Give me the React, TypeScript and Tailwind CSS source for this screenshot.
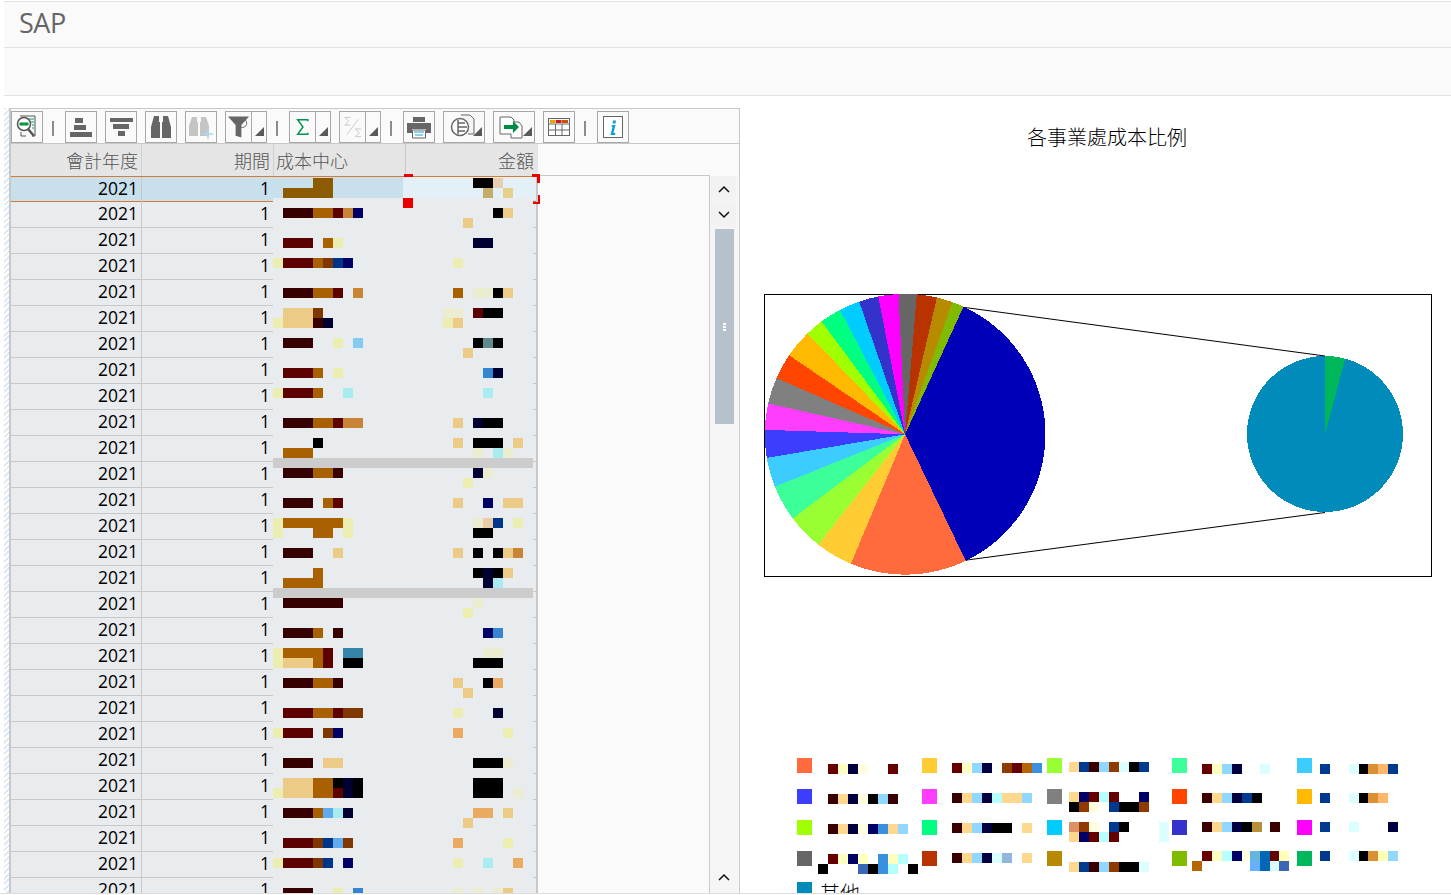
import type { ReactNode } from "react"

const cjk = '"Noto Sans CJK TC", "Noto Sans", sans-serif'

// redaction mosaic colours
const D = "#360000"
const M = "#5c0000"
const O = "#a86000"
const B = "#803600"
const C = "#c98436"
const T = "#ebcb85"
const Y = "#ecedb0"
const P = "#ecedd0"
const N = "#000066"
const K = "#000033"
const L = "#00358c"
const A = "#a8ecf0"
const S = "#3585d0"
const R = "#eaaa60"
const Z = "#000000"

type Row = [number, [number, number, string][]]

const tableMosaic: Row[] = [
  [178, [[313, 20, "#8c5a00"], [473, 20, Z], [493, 10, "#e6cfb0"]]],
  [188, [[283, 50, "#8c5a00"], [483, 10, "#c4ad68"], [503, 10, "#e6d08c"]]],
  [198, [[403, 10, "#e60000"]]],
  [208, [[283, 30, D], [313, 20, O], [333, 10, M], [343, 10, C], [353, 10, N], [493, 10, Z], [503, 10, T]]],
  [218, [[463, 10, T]]],
  [238, [[283, 30, M], [323, 10, O], [333, 10, Y], [473, 20, K]]],
  [258, [[273, 10, Y], [283, 30, M], [313, 10, O], [323, 10, B], [333, 10, L], [343, 10, N], [453, 10, Y]]],
  [288, [[283, 30, D], [313, 20, O], [333, 10, M], [353, 10, C], [453, 10, O], [473, 20, P], [493, 10, Z], [503, 10, T]]],
  [308, [[283, 30, T], [313, 10, B], [443, 20, P], [473, 10, M], [483, 20, Z]]],
  [318, [[273, 10, Y], [283, 30, T], [313, 10, D], [323, 10, K], [443, 10, Y], [453, 10, T]]],
  [338, [[283, 30, D], [333, 10, Y], [353, 10, "#85caf0"], [473, 10, Z], [483, 10, "#5f8a8a"], [493, 10, Z]]],
  [348, [[463, 10, T]]],
  [368, [[283, 30, M], [313, 10, O], [333, 10, Y], [483, 10, S], [493, 10, K]]],
  [388, [[273, 10, Y], [283, 30, M], [313, 10, O], [343, 10, A], [483, 10, A]]],
  [418, [[283, 30, D], [313, 20, O], [333, 10, M], [343, 20, C], [453, 10, T], [473, 10, K], [483, 20, Z]]],
  [438, [[313, 10, Z], [453, 10, T], [473, 30, Z], [513, 10, T]]],
  [448, [[283, 30, O], [473, 10, P], [493, 10, A], [503, 10, P]]],
  [458, [[273, 260, "#cccccc"]]],
  [468, [[283, 30, D], [313, 20, O], [333, 10, D], [473, 10, K], [483, 10, P]]],
  [478, [[463, 10, Y]]],
  [498, [[283, 30, D], [323, 10, O], [333, 10, M], [453, 10, T], [483, 10, N], [503, 20, T]]],
  [518, [[273, 10, Y], [283, 60, O], [343, 10, Y], [473, 10, P], [483, 10, "#ebcbaa"], [493, 10, L], [513, 10, Y]]],
  [528, [[273, 10, Y], [313, 20, O], [343, 10, Y], [473, 20, Z]]],
  [548, [[283, 30, D], [333, 10, T], [453, 10, T], [473, 10, Z], [493, 10, Z], [503, 10, T], [513, 10, C]]],
  [568, [[313, 10, O], [473, 10, Z], [483, 10, K], [493, 10, Z], [503, 10, T]]],
  [578, [[283, 40, O], [483, 10, K], [493, 10, A]]],
  [588, [[273, 260, "#cccccc"]]],
  [598, [[283, 60, D], [473, 10, P]]],
  [608, [[463, 10, Y]]],
  [628, [[283, 30, D], [313, 10, O], [333, 10, D], [483, 10, N], [493, 10, S]]],
  [648, [[273, 10, Y], [283, 40, O], [323, 10, M], [343, 20, "#3585aa"], [483, 20, P]]],
  [658, [[273, 10, Y], [283, 30, T], [313, 10, O], [323, 10, M], [343, 20, Z], [473, 30, Z]]],
  [678, [[283, 30, D], [313, 20, O], [333, 10, D], [453, 10, T], [483, 10, Z], [493, 10, R]]],
  [688, [[463, 10, T]]],
  [708, [[283, 30, M], [313, 20, O], [333, 10, M], [343, 20, B], [453, 10, Y], [493, 10, K]]],
  [728, [[273, 10, Y], [283, 30, M], [323, 10, B], [333, 10, N], [453, 10, R], [503, 10, Y]]],
  [758, [[283, 30, D], [323, 20, T], [473, 30, Z], [503, 10, P]]],
  [778, [[283, 30, T], [313, 20, O], [333, 10, Z], [343, 10, K], [353, 10, Z], [473, 30, Z]]],
  [788, [[273, 10, Y], [283, 30, T], [313, 20, O], [333, 10, M], [343, 10, K], [353, 10, Z], [473, 30, Z], [513, 10, P]]],
  [808, [[283, 30, D], [313, 10, O], [323, 10, "#60aaf0"], [333, 10, A], [343, 10, K], [473, 20, R], [503, 10, T]]],
  [818, [[463, 10, T]]],
  [838, [[283, 30, M], [313, 10, B], [323, 10, L], [333, 10, "#60aaf0"], [343, 10, B], [453, 10, R], [503, 10, Y]]],
  [858, [[273, 10, Y], [283, 30, M], [313, 10, B], [323, 10, L], [343, 10, N], [453, 10, Y], [483, 10, A], [513, 10, R]]],
  [888, [[283, 30, D], [333, 10, Y], [353, 10, S], [453, 10, P], [473, 10, P], [493, 10, P], [503, 10, T]]],
]

const a = "#660000"
const b = "#ffffc0"
const c = "#000040"
const d = "#ffffe0"
const e = "#3a0000"
const f = "#ffd890"
const g = "#90d8ff"
const h = "#000066"
const i = "#3a90e0"
const j = "#b6ffff"
const k = "#003a90"
const l = "#903a00"
const m = "#dbffff"
const n = "#db9036"
const o = "#ffb666"

const legendMosaic: Row[] = [
  [764, [[828, 10, a], [838, 10, b], [848, 10, c], [858, 10, d], [888, 10, a]]],
  [794, [[828, 10, e], [838, 10, f], [848, 10, c], [858, 10, d], [868, 10, Z], [878, 10, g], [888, 10, e]]],
  [824, [[828, 10, e], [838, 10, f], [848, 10, c], [858, 10, d], [868, 10, h], [878, 10, i], [888, 10, f], [898, 10, g]]],
  [854, [[828, 10, a], [838, 10, b], [848, 10, h], [858, 10, b], [878, 10, i], [888, 10, b], [898, 10, j]]],
  [864, [[818, 10, Z], [858, 10, "#3a66b6"], [868, 10, Z], [878, 10, i], [888, 10, j], [908, 10, Z]]],

  [763, [[952, 10, a], [962, 10, b], [972, 10, g], [982, 10, c], [1002, 10, l], [1012, 10, a], [1022, 10, "#b66600"], [1032, 10, i]]],
  [793, [[952, 10, e], [962, 10, f], [972, 10, g], [982, 10, c], [992, 10, j], [1002, 20, f], [1022, 10, g]]],
  [823, [[952, 10, e], [962, 10, f], [972, 10, g], [982, 10, c], [992, 20, Z], [1022, 10, f]]],
  [853, [[952, 10, e], [962, 10, f], [972, 10, g], [982, 10, c], [992, 10, m], [1002, 10, "#90b6db"], [1022, 10, f]]],

  [762, [[1069, 10, f], [1079, 10, k], [1089, 10, e], [1099, 10, g], [1109, 10, l], [1119, 10, m], [1129, 10, Z], [1139, 10, k]]],
  [792, [[1069, 10, f], [1079, 10, h], [1089, 10, a], [1099, 10, j], [1109, 10, a], [1139, 10, h]]],
  [802, [[1069, 10, Z], [1079, 10, l], [1089, 10, d], [1109, 10, k], [1119, 20, Z], [1139, 10, l]]],
  [822, [[1069, 10, "#db9066"], [1079, 10, l], [1089, 10, d], [1109, 10, k], [1119, 10, Z], [1159, 10, m]]],
  [832, [[1069, 10, f], [1079, 10, h], [1089, 10, a], [1099, 10, j], [1109, 10, a], [1159, 10, m]]],
  [862, [[1069, 10, f], [1079, 10, k], [1089, 10, e], [1099, 10, g], [1109, 10, l], [1119, 20, Z], [1139, 10, m]]],

  [764, [[1202, 10, a], [1212, 10, b], [1222, 10, g], [1232, 10, c], [1260, 10, m]]],
  [793, [[1202, 10, e], [1212, 10, f], [1222, 10, g], [1232, 10, c], [1242, 10, k], [1252, 10, Z]]],
  [822, [[1202, 10, e], [1212, 10, f], [1222, 10, g], [1232, 10, c], [1242, 10, Z], [1252, 10, "#b8903a"], [1270, 10, e]]],
  [851, [[1202, 10, a], [1212, 10, b], [1222, 10, j], [1232, 10, h], [1242, 10, d], [1250, 10, "#66b6db"], [1260, 10, "#0066b6"], [1270, 10, a], [1279, 10, "#ffffb6"]]],
  [861, [[1192, 10, "#b66600"], [1250, 10, "#66b0ff"], [1260, 10, "#0066b6"], [1270, 10, m], [1279, 10, "#3a66b6"]]],

  [764, [[1320, 10, k], [1349, 10, m], [1359, 10, Z], [1368, 10, n], [1378, 10, o], [1388, 10, k]]],
  [793, [[1320, 10, k], [1349, 10, m], [1359, 10, Z], [1368, 10, n], [1378, 10, o]]],
  [822, [[1320, 10, k], [1349, 10, m], [1388, 10, c]]],
  [851, [[1320, 10, k], [1349, 10, m], [1359, 10, Z], [1368, 10, n], [1378, 10, "#ffffb6"], [1388, 10, g]]],
]

// [end angle clockwise from 12 o'clock, colour]
const slices: [number, string][] = [
  [154.4, "#0000b8"],
  [202.7, "#ff6b3d"],
  [218.2, "#ffcc33"],
  [233.2, "#99ff33"],
  [248.1, "#3dff99"],
  [260.3, "#3dccff"],
  [271.8, "#3d3dff"],
  [282.7, "#ff3dff"],
  [293.6, "#808080"],
  [304.3, "#ff4500"],
  [315.9, "#ffb900"],
  [323.5, "#a0ff00"],
  [332.4, "#00ff80"],
  [340.9, "#00ccff"],
  [349, "#3333cc"],
  [357.3, "#ff00ff"],
  [364.8, "#666666"],
  [373.1, "#b83300"],
  [379.7, "#b88a00"],
  [384.6, "#80bb00"],
]

const legend = [
  "#ff6b3d", "#ffcc33", "#99ff33", "#3dff99", "#3dccff",
  "#3d3dff", "#ff3dff", "#808080", "#ff4500", "#ffb900",
  "#a0ff00", "#00ff80", "#00ccff", "#3333cc", "#ff00ff",
  "#666666", "#b83300", "#b88a00", "#80bb00", "#00b85c",
  "#008bbb",
]

function wedge(cx: number, cy: number, r: number, from: number, to: number) {
  const pt = (deg: number) => {
    const t = (deg * Math.PI) / 180
    return `${cx + r * Math.sin(t)} ${cy - r * Math.cos(t)}`
  }
  const large = to - from > 180 ? 1 : 0
  return `M${cx} ${cy}L${pt(from)}A${r} ${r} 0 ${large} 1 ${pt(to)}Z`
}

function PieChart() {
  return (
    <svg width="668" height="283" viewBox="764 294 668 283" shapeRendering="crispEdges" className="block ml-[24px] mt-[143px]">
      <rect x="764.5" y="294.5" width="667" height="282" fill="#fff" stroke="#000" />
      {slices.map(([end, color], idx) => (
        <path key={color} d={wedge(905.1, 434.3, 140.4, idx === 0 ? 24.6 : slices[idx - 1][0], end)} fill={color} />
      ))}
      <circle cx="1325" cy="434" r="78" fill="#008bbb" />
      <path d={wedge(1325, 434, 78, 0, 15)} fill="#00b85c" />
      <g shapeRendering="auto" stroke="#000" strokeWidth="1">
        <line x1="965" y1="307.5" x2="1325" y2="356" />
        <line x1="967" y1="560" x2="1325" y2="512.5" />
      </g>
    </svg>
  )
}

function Mosaic() {
  return (
    <div className="absolute inset-0 pointer-events-none">
      <div className="absolute left-[273px] top-[178px] w-[130px] h-[20px] bg-[#c8dfec]"></div>
      <div className="absolute left-[403px] top-[178px] w-[130px] h-[20px] bg-[#e4f0f8]"></div>
      <div className="absolute left-[273px] top-[198px] w-[260px] h-[695px] bg-[#e9ecef] overflow-hidden"></div>
      {[...tableMosaic, ...legendMosaic].flatMap(([y, cells]) =>
        cells.map(([x, w, color]) => (
          <div
            key={`${x}-${y}`}
            className="absolute"
            style={{ left: x, top: y, width: w, height: Math.min(10, 893 - y), background: color }}
          ></div>
        ))
      )}
      {/* selected cell corners */}
      <div className="absolute left-[404px] top-[174px] w-[9px] h-[3px] bg-[#e60000]"></div>
      <div className="absolute left-[532px] top-[174px] w-[8px] h-[3px] bg-[#e60000]"></div>
      <div className="absolute left-[537px] top-[174px] w-[3px] h-[9px] bg-[#e60000]"></div>
      <div className="absolute left-[538px] top-[195px] w-[2px] h-[9px] bg-[#e60000]"></div>
      <div className="absolute left-[533px] top-[202px] w-[7px] h-[2px] bg-[#e60000]"></div>
    </div>
  )
}

function Tri() {
  return (
    <svg width="9" height="9" viewBox="0 0 9 9" className="absolute right-[2px] bottom-[6px]">
      <path d="M9 0V9H0Z" fill="#595959" />
    </svg>
  )
}

function Btn({ children, split, wide }: { children: ReactNode; split?: boolean; wide?: boolean }) {
  if (split) {
    return (
      <div className="flex h-[32px]">
        <div className="w-[27px] h-[32px] border border-[#a8a8a8] flex items-center justify-center">{children}</div>
        <div className="relative w-[15px] h-[32px] border border-l-0 border-[#a8a8a8]">
          <Tri />
        </div>
      </div>
    )
  }
  return (
    <div className={`relative ${wide ? "w-[42px]" : "w-[32px]"} h-[32px] border border-[#a8a8a8] flex items-center`}>
      {children}
      {wide && <Tri />}
    </div>
  )
}

const Sep = () => <div className="w-[2px] h-[15px] mt-[10px] bg-[#8c8c8c] ml-px mr-[3px]"></div>

const Ico = ({ w = 30, h = 30, children }: { w?: number; h?: number; children: ReactNode }) => (
  <svg width={w} height={h} viewBox={`0 0 ${w} ${h}`} className="block">
    {children}
  </svg>
)

function Toolbar() {
  return (
    <div className="flex items-start gap-2 h-[35px] pt-[2px] border-b border-[#c8c8c8]">
      <Btn>
        <Ico>
          <path d="M8 4H23V24H20M14 24H9V20" fill="none" stroke="#555" />
          <path d="M17 7H22M19 10H22M20 13H22M20 16H22" stroke="#00a060" />
          <circle cx="12" cy="12" r="6.5" fill="#fff" stroke="#555" strokeWidth="1.5" />
          <rect x="7.5" y="10.5" width="9" height="3" fill="#00923f" />
          <path d="M16 17L22 24" stroke="#555" strokeWidth="2.5" />
        </Ico>
      </Btn>
      <Sep />
      <Btn>
        <Ico>
          <path d="M9 6H17V11H9ZM8 13H20V18H8ZM4 20H26V25H4Z" fill="#666" />
        </Ico>
      </Btn>
      <Btn>
        <Ico>
          <path d="M4 6H27V10H4ZM7 12H23V17H7ZM12 19H19V24H12Z" fill="#666" />
        </Ico>
      </Btn>
      <Btn>
        <Ico>
          <path d="M8 4H13V10H14V26H5V15ZM17 4H22L25 15V26H16V10H17Z" fill="#666" />
        </Ico>
      </Btn>
      <Btn>
        <Ico>
          <path d="M6 5H11V10H12V24H3V14ZM15 5H20L23 14V24H14V10H15Z" fill="#c4c4c4" />
          <path d="M22 17V27M17 22H27" stroke="#a8d8f0" strokeWidth="1.5" />
        </Ico>
      </Btn>
      <Btn split>
        <svg width="26" height="30" viewBox="0 0 26 30">
          <path d="M2 4H24L16 13V26L10 24V13Z" fill="#666" />
          <circle cx="17" cy="11" r="4.500" fill="none" stroke="#666" />
        </svg>
      </Btn>
      <Sep />
      <Btn split>
        <svg width="26" height="30" viewBox="0 0 26 30">
          <path d="M18.500 9V7.500H8L13.500 15L8 22.500H18.500V21" fill="none" stroke="#00924f" strokeWidth="1.500" />
        </svg>
      </Btn>
      <Btn split>
        <svg width="26" height="30" viewBox="0 0 26 30">
          <path d="M11 5H5L9 9L5 13H11M22 17H16L20 21L16 25H22M19 7L7 23" fill="none" stroke="#c8c8c8" />
        </svg>
      </Btn>
      <Sep />
      <Btn>
        <Ico>
          <path d="M9 5H21V10H9Z" fill="#666" />
          <path d="M3 11H27V21H22V17H8V21H3Z" fill="#666" />
          <path d="M8.500 18H21.500V26H8.500Z" fill="#fff" stroke="#666" />
          <path d="M10 20H20M11 23H19" stroke="#18a0e0" />
        </Ico>
      </Btn>
      <Btn wide>
        <svg width="31" height="30" viewBox="0 0 31 30" className="ml-[4px]">
          <path d="M13 3H22L26 7V22H20" fill="#f4f4f4" stroke="#666" />
          <circle cx="12" cy="15" r="8.500" fill="#fff" stroke="#666" strokeWidth="1.500" />
          <path d="M10 8V22M10 11H17M10 15H19M10 19H17" fill="none" stroke="#666" strokeWidth="1.500" />
        </svg>
      </Btn>
      <Btn wide>
        <svg width="31" height="30" viewBox="0 0 31 30" className="ml-[3px]">
          <path d="M3 5H14L17 8V22H3Z" fill="#fff" stroke="#666" />
          <path d="M17 10H22L25 14V26H14V22" fill="#fff" stroke="#666" />
          <path d="M7 13H16V9L22 15L16 21V17H7Z" fill="#008c46" />
        </svg>
      </Btn>
      <Btn>
        <Ico>
          <rect x="4.500" y="6.500" width="21" height="17" fill="#fff" stroke="#666" />
          <rect x="6" y="8" width="5.500" height="3" fill="#f0a000" />
          <rect x="12" y="8" width="5.500" height="3" fill="#d01818" />
          <rect x="18" y="8" width="6" height="3" fill="#d05000" />
          <path d="M5 12H25M5 18H25M11.500 12V24M18 12V24" stroke="#666" />
        </Ico>
      </Btn>
      <Sep />
      <Btn>
        <Ico>
          <rect x="5.500" y="4.500" width="19" height="21" fill="#fff" stroke="#666" />
          <path d="M15 8.500H18L17.500 11.500H14.500ZM14 13H17.500L15.500 21H17.500L17 23H12.500L14.500 15H13.500Z" fill="#0a9fe0" />
        </Ico>
      </Btn>
    </div>
  )
}

function Chevron({ up }: { up?: boolean }) {
  return (
    <svg width="12" height="8" viewBox="0 0 12 8">
      <path d={up ? "M1 7L6 2L11 7" : "M1 1L6 6L11 1"} fill="none" stroke="#111" strokeWidth="1.500" />
    </svg>
  )
}

function Table() {
  const rows = Array.from({ length: 28 }, (_, idx) => idx)
  return (
    <div className="w-[527px] shrink-0">
      <div className="flex h-[33px] bg-[#e5e5e5] border-b border-[#d97a30] text-[18px] font-light text-[#555]" style={{ fontFamily: cjk }}>
        <div className="w-[131px] flex items-center justify-end pr-[3px] border-r border-[#d0d0d0]">會計年度</div>
        <div className="w-[132px] flex items-center justify-end pr-[3px] border-r border-[#d0d0d0]">期間</div>
        <div className="w-[132px] flex items-center pl-[2px] border-r border-[#c8c8c8]">成本中心</div>
        <div className="w-[132px] flex items-center justify-end pr-[4px]">金額</div>
      </div>
      {rows.map((idx) => (
        <div
          key={idx}
          className={`flex text-[17.5px] text-black font-['Open_Sans',sans-serif] ${
            idx === 0 ? "h-[25px] pb-[1px] bg-[#c8dfec] border-b border-[#d97a30]" : "h-[26px] pb-[3px] bg-[#e9ecef] border-b border-[#c8c8c8]"
          }`}
        >
          <div className="w-[131px] flex items-center justify-end pr-[4px] relative after:absolute after:right-0 after:top-0 after:h-[26px] after:w-px after:bg-[#c8c8c8]">2021</div>
          <div className="w-[132px] flex items-center justify-end pr-[4px] relative after:absolute after:right-0 after:top-0 after:h-[26px] after:w-px after:bg-[#c8c8c8]">1</div>
          <div className="w-[132px]"></div>
          <div className={`w-[132px] relative after:absolute after:right-0 after:top-0 after:h-[26px] after:w-[2px] after:bg-[#c8c8c8] ${idx === 0 ? "bg-[#e4f0f8]" : ""}`}></div>
        </div>
      ))}
    </div>
  )
}

function Scrollbar() {
  return (
    <div className="w-[28px] shrink-0 mt-[32px] pl-[1px] flex flex-col gap-[1px] h-[717px] bg-[#f5f5f5]">
      <div className="w-[25px] h-[25px] bg-[#f2f2f2] flex items-center justify-center">
        <Chevron up />
      </div>
      <div className="w-[25px] h-[25px] bg-[#f2f2f2] flex items-center justify-center">
        <Chevron />
      </div>
      <div className="ml-[4px] mt-[1px] w-[19px] h-[195px] bg-[#b6c1cb] flex flex-col items-center justify-center gap-[1px]">
        <div className="w-[3px] h-[2px] bg-white"></div>
        <div className="w-[3px] h-[2px] bg-white"></div>
        <div className="w-[3px] h-[2px] bg-white"></div>
      </div>
      <div className="flex-1"></div>
      <div className="w-[25px] h-[25px] mb-[4px] flex items-center justify-center">
        <Chevron up />
      </div>
    </div>
  )
}

export default function App() {
  return (
    <div className="relative w-[1451px] h-[895px] overflow-hidden bg-white">
      <div className="h-[1px]"></div>
      <div className="ml-[4px] bg-[#fafafa] border-t border-[#e0e0e0]">
        <div className="h-[46px] border-b border-[#e3e3e3] pl-[15px] pb-[2px] flex items-center text-[27px] tracking-[-0.5px] text-[#666] font-['Open_Sans',sans-serif]">
          SAP
        </div>
        <div className="h-[48px] border-b border-[#e3e3e3]"></div>
      </div>

      <div className="flex mt-[12px] h-[786px] border-b border-[#dedede] overflow-hidden">
        <div className="w-[4px]"></div>
        <div className="w-[5px] bg-[repeating-linear-gradient(135deg,#dcebf7_0px,#dcebf7_2px,#ffffff_2px,#ffffff_4px)]"></div>

        <div className="w-[731px] shrink-0 border-l-2 border-r border-t border-[#c8c8c8] bg-[#fafafa]">
          <Toolbar />
          <div className="flex">
            <Table />
            <div className="w-[172px] shrink-0 mt-[31px] h-[720px] border-t border-r border-[#c8c8c8]"></div>
            <Scrollbar />
          </div>
        </div>

        <div className="flex-1 min-w-0">
          <div className="pt-[15px] pl-[287px] text-[20px] leading-[28px] font-light text-black" style={{ fontFamily: cjk }}>
            各事業處成本比例
          </div>
          <PieChart />
          <div className="ml-[57px] mt-[181px] grid grid-cols-[repeat(5,125px)] auto-rows-[31px]">
            {legend.map((color, idx) => (
              <div key={color} className="flex items-start">
                <div className="w-[15px] h-[15px]" style={{ background: color }}></div>
                {idx === 20 && (
                  <span className="ml-[8px] text-[20px] leading-[28px] -mt-[3px] font-light text-black" style={{ fontFamily: cjk }}>
                    其他
                  </span>
                )}
              </div>
            ))}
          </div>
        </div>
      </div>

      <Mosaic />
    </div>
  )
}
